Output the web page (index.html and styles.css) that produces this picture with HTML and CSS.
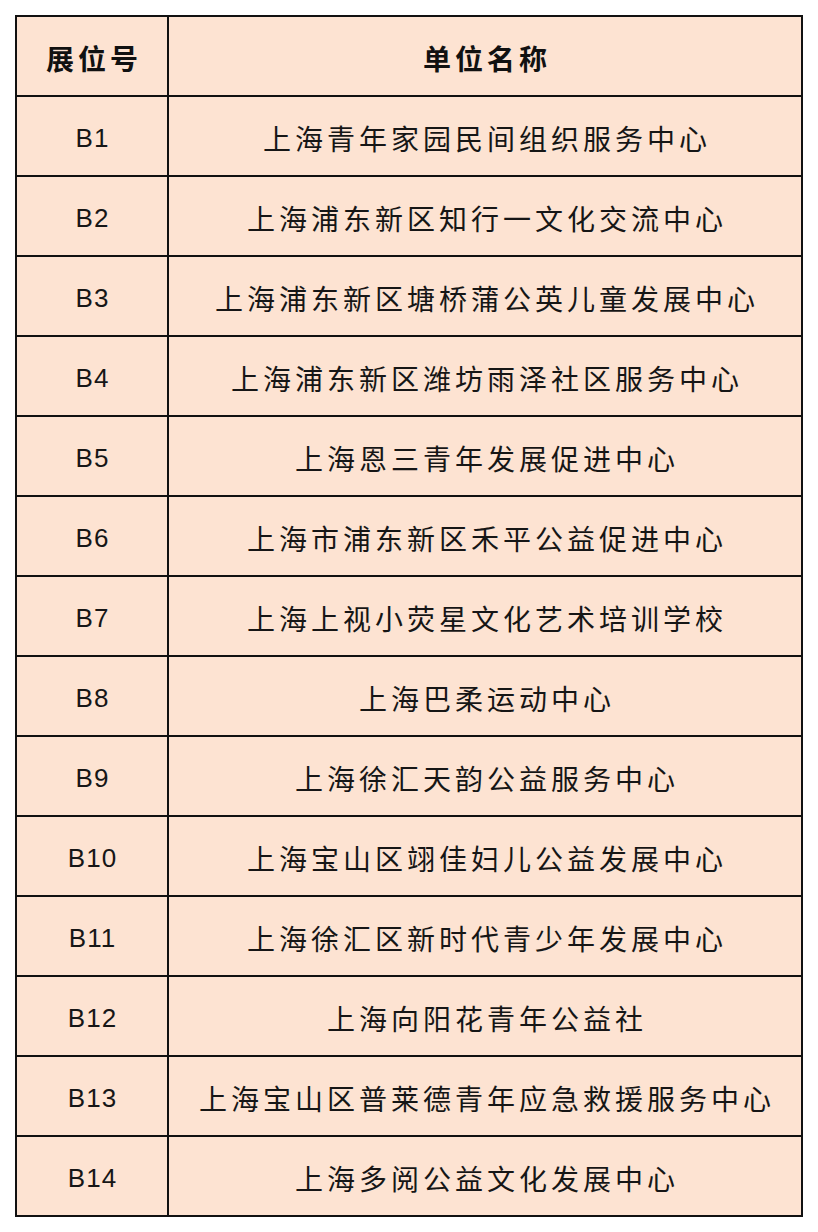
FILE: index.html
```html
<!DOCTYPE html>
<html lang="zh-CN">
<head>
<meta charset="utf-8">
<link rel="stylesheet" href="styles.css">
</head>
<body>
<table class="booths">
  <thead>
    <tr><th class="num">展位号</th><th class="name">单位名称</th></tr>
  </thead>
  <tbody>
    <tr><td class="num">B1</td><td class="name">上海青年家园民间组织服务中心</td></tr>
    <tr><td class="num">B2</td><td class="name">上海浦东新区知行一文化交流中心</td></tr>
    <tr><td class="num">B3</td><td class="name">上海浦东新区塘桥蒲公英儿童发展中心</td></tr>
    <tr><td class="num">B4</td><td class="name">上海浦东新区潍坊雨泽社区服务中心</td></tr>
    <tr><td class="num">B5</td><td class="name">上海恩三青年发展促进中心</td></tr>
    <tr><td class="num">B6</td><td class="name">上海市浦东新区禾平公益促进中心</td></tr>
    <tr><td class="num">B7</td><td class="name">上海上视小荧星文化艺术培训学校</td></tr>
    <tr><td class="num">B8</td><td class="name">上海巴柔运动中心</td></tr>
    <tr><td class="num">B9</td><td class="name">上海徐汇天韵公益服务中心</td></tr>
    <tr><td class="num">B10</td><td class="name">上海宝山区翊佳妇儿公益发展中心</td></tr>
    <tr><td class="num">B11</td><td class="name">上海徐汇区新时代青少年发展中心</td></tr>
    <tr><td class="num">B12</td><td class="name">上海向阳花青年公益社</td></tr>
    <tr><td class="num">B13</td><td class="name">上海宝山区普莱德青年应急救援服务中心</td></tr>
    <tr><td class="num">B14</td><td class="name">上海多阅公益文化发展中心</td></tr>
  </tbody>
</table>
</body>
</html>
```
FILE: styles.css
```css
html, body {
  margin: 0;
  padding: 0;
  background: #ffffff;
}
body {
  padding: 15px 16px 0 15px;
  font-family: "Noto Sans CJK SC", "Noto Sans", sans-serif;
  color: #161616;
}
.booths {
  border-collapse: collapse;
  width: 788px;
  background: #fde3d2;
}
.booths th,
.booths td {
  border: 2px solid #111111;
  height: 75px;
  padding: 3px 0 0 0;
  text-align: center;
  vertical-align: middle;
  font-size: 28px;
  letter-spacing: 4px;
  text-indent: 4px;
  line-height: 1;
}
.booths th {
  font-weight: 700;
  color: #111111;
}
.booths td {
  font-weight: 400;
}
.booths .num {
  width: 150px;
}
.booths td.num {
  font-family: "Liberation Sans", Arial, sans-serif;
  font-size: 26px;
  letter-spacing: 1px;
  text-indent: 1px;
  padding-top: 4px;
  height: 74px;
}
```
